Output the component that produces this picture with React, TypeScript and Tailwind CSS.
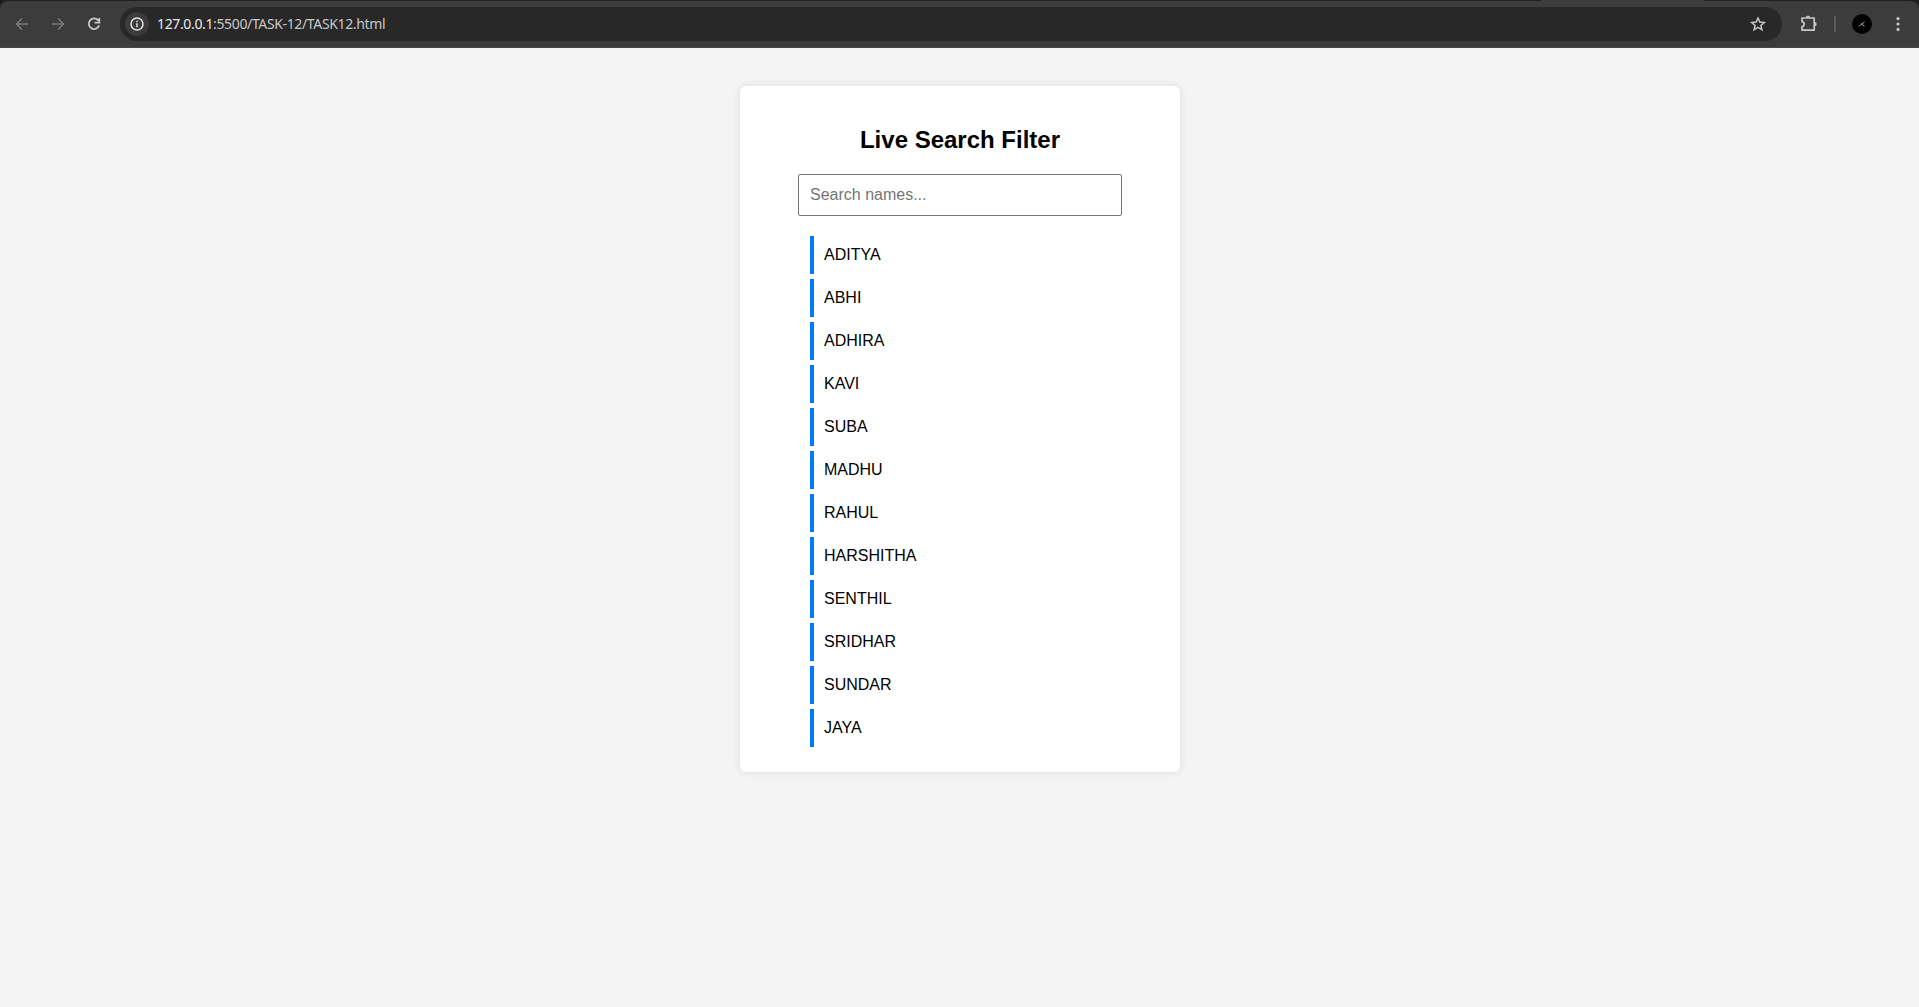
import React, { useState } from "react";

const NAMES = ["ADITYA", "ABHI", "ADHIRA", "KAVI", "SUBA", "MADHU", "RAHUL", "HARSHITHA", "SENTHIL", "SRIDHAR", "SUNDAR", "JAYA"];

function Toolbar() {
  return (
    <header className="h-12 bg-[#1f1f1f]">
      <div className="ml-[1541px] h-px w-[163px] bg-[#3c3c3c]" />
      <div className="flex h-[47px] items-center rounded-t-lg border-b border-[#474747] bg-[#3c3c3c] pl-[14px] pr-[13px]">
        <svg className="h-4 w-4 shrink-0" viewBox="0 0 16 16" fill="none" stroke="#7c7c7c" strokeWidth="1.6">
          <path d="M14 8H3M8 2.5L2.5 8L8 13.5" />
        </svg>
        <svg className="ml-5 h-4 w-4 shrink-0" viewBox="0 0 16 16" fill="none" stroke="#7c7c7c" strokeWidth="1.6">
          <path d="M2 8H13M8 2.5L13.5 8L8 13.5" />
        </svg>
        <svg className="ml-5 h-4 w-4 shrink-0" viewBox="0 0 16 16" fill="none" stroke="#c7c7c7" strokeWidth="1.8">
          <path d="M12.2 4.4A5.3 5.3 0 1 0 13.1 9.4M13.3 2V6.6H8.6" />
        </svg>
        <div className="ml-[18px] flex h-[34px] flex-1 items-center rounded-full bg-[#282828] pl-[5px] pr-4">
          <div className="flex h-6 w-6 items-center justify-center rounded-full bg-[#3c3c3c]">
            <svg className="h-[14px] w-[14px]" viewBox="0 0 14 14" fill="none" stroke="#e3e3e3" strokeWidth="1.5">
              <circle cx="7" cy="7" r="6" />
              <path d="M7 6.2V10.2M7 3.7V5.2" />
            </svg>
          </div>
          <span className="ml-2 whitespace-nowrap font-['Noto_Sans','Open_Sans',sans-serif] text-[14px] leading-5 tracking-[-0.36px] text-[#c7c7c7]">
            <span className="text-[#e8e8e8]">127.0.0.1</span>:5500/TASK-12/TASK12.html
          </span>
          <svg className="ml-auto h-4 w-4" viewBox="0 0 16 16" fill="none" stroke="#c7c7c7" strokeWidth="1.5">
            <path d="M8 2L9.8 6.1L14.2 6.5L10.9 9.4L11.9 13.8L8 11.4L4.1 13.8L5.1 9.4L1.8 6.5L6.2 6.1Z" />
          </svg>
        </div>
        <svg className="ml-[18px] h-[18px] w-[18px] shrink-0" viewBox="0 0 18 18" fill="none" stroke="#c7c7c7" strokeWidth="1.7" strokeLinejoin="round">
          <path d="M2 3H14.2V15.2H2V11.7A2.6 2.6 0 0 0 2 6.6Z" />
          <path d="M5.9 2.6A2.1 2.1 0 0 1 10.1 2.6ZM14.6 7.1A2.1 2.1 0 0 1 14.6 11.3Z" fill="#c7c7c7" stroke="none" />
        </svg>
        <div className="ml-4 h-4 w-0.5 bg-[#5c5c5c]" />
        <div className="ml-4 flex h-5 w-5 items-center justify-center rounded-full bg-black">
          <svg className="h-2 w-2" viewBox="0 0 8 8" fill="none" stroke="#b0b0b0">
            <path d="M1 6.5L3 4.5L6.5 2M3 4L6.5 6" />
          </svg>
        </div>
        <svg className="ml-[18px] h-4 w-4" viewBox="0 0 16 16" fill="#c7c7c7">
          <circle cx="8" cy="2.6" r="1.6" />
          <circle cx="8" cy="8" r="1.6" />
          <circle cx="8" cy="13.4" r="1.6" />
        </svg>
      </div>
    </header>
  );
}

export default function App() {
  const [query, setQuery] = useState("");
  const shown = NAMES.filter((name) => name.toLowerCase().includes(query.toLowerCase()));
  return (
    <div className="min-h-[1007px] bg-[#f4f4f4] font-['Liberation_Sans',Arial,sans-serif] text-black">
      <Toolbar />
      <div className="pt-[38px] pl-px">
        <main className="mx-auto w-[440px] rounded-md bg-white px-5 pt-10 pb-5 shadow-[0_0_10px_rgba(0,0,0,0.1)]">
          <h2 className="text-center text-2xl leading-7 font-bold">Live Search Filter</h2>
          <input
            className="mx-auto mt-5 block h-[42px] w-[324px] rounded-[2px] border border-[#767676] bg-white px-[11px] text-base outline-none placeholder:text-[#757575]"
            placeholder="Search names..."
            value={query}
            onChange={(event) => setQuery(event.target.value)}
          />
          <ul className="mt-5 ml-[50px]">
            {shown.map((name) => (
              <li key={name} className="mb-[5px] h-[38px] border-l-4 border-[#007bff] pl-2.5 leading-[38px]">
                {name}
              </li>
            ))}
          </ul>
        </main>
      </div>
    </div>
  );
}
